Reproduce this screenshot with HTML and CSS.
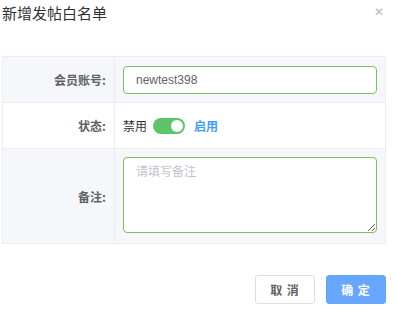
FILE: index.html
```html
<!DOCTYPE html>
<html lang="zh-CN">
<head>
    <meta charset="UTF-8">
    <title>新增发帖白名单</title>
    <link rel="stylesheet" href="styles.css">
</head>
<body>
    <div class="dialog">
        <div class="dialog-header">
            <span class="dialog-title">新增发帖白名单</span>
            <span class="dialog-close">&#x2715;</span>
        </div>

        <table class="form-table">
            <tr class="row-gray">
                <td class="label">会员账号:</td>
                <td class="field">
                    <input type="text" class="text-input" value="newtest398">
                </td>
            </tr>
            <tr>
                <td class="label">状态:</td>
                <td class="field">
                    <div class="switch-group">
                        <span class="switch-off">禁用</span>
                        <span class="switch"><span class="switch-knob"></span></span>
                        <span class="switch-on">启用</span>
                    </div>
                </td>
            </tr>
            <tr class="row-gray">
                <td class="label">备注:</td>
                <td class="field field-last">
                    <textarea class="text-area" placeholder="请填写备注"></textarea>
                </td>
            </tr>
        </table>

        <div class="dialog-footer">
            <button class="btn">取 消</button>
            <button class="btn btn-primary">确 定</button>
        </div>
    </div>
</body>
</html>
```

FILE: styles.css
```css
body {
    margin: 0;
    background-color: #fff;
    font-family: "Helvetica Neue", "Liberation Sans", "Noto Sans CJK SC", sans-serif;
    color: #303133;
}
.dialog {
    width: 384px;
    padding: 0 0 0 2px;
}
.dialog-header {
    display: flex;
    justify-content: space-between;
    align-items: center;
    height: 26px;
}
.dialog-title {
    font-size: 15px;
    color: #303133;
    font-family: "Noto Sans CJK SC", sans-serif;
    line-height: 26px;
}
.dialog-close {
    font-size: 12px;
    color: #b4b8bf;
    margin-right: 2px;
    margin-top: -3px;
}
.form-table {
    margin-top: 30px;
    width: 384px;
    border-collapse: collapse;
    border: 1px solid #ebeef5;
    font-size: 12px;
}
.form-table td {
    border: 1px solid #ebeef5;
    padding: 0;
}
.row-gray td {
    background-color: #f5f7fa;
}
.label {
    width: 103px;
    text-align: right;
    padding-right: 8px !important;
    color: #606266;
    font-weight: bold;
    font-family: "Noto Sans CJK SC", sans-serif;
}
.field {
    padding: 8px !important;
}
.field-last {
    padding-bottom: 10px !important;
}
tr:first-child,
tr:nth-child(2) {
    height: 46px;
}
.text-input {
    box-sizing: border-box;
    display: block;
    width: 254px;
    height: 28px;
    border: 1px solid #7cc35b;
    border-radius: 4px;
    padding: 0 12px;
    font-size: 12px;
    font-family: "Liberation Sans", sans-serif;
    color: #606266;
    outline: none;
    background: #fff;
}
.switch-group {
    display: flex;
    align-items: center;
}
.switch-off {
    color: #303133;
    font-family: "Noto Sans CJK SC", sans-serif;
    margin-right: 6px;
}
.switch {
    display: flex;
    align-items: center;
    justify-content: flex-end;
    box-sizing: border-box;
    width: 32px;
    height: 16px;
    border-radius: 8px;
    background-color: #5dc46c;
    padding: 0 2px;
}
.switch-knob {
    width: 12px;
    height: 12px;
    border-radius: 50%;
    background: #fff;
}
.switch-on {
    color: #409eff;
    font-weight: bold;
    font-family: "Noto Sans CJK SC", sans-serif;
    margin-left: 9px;
}
.text-area {
    box-sizing: border-box;
    display: block;
    width: 254px;
    height: 76px;
    border: 1px solid #7cc35b;
    border-radius: 4px;
    padding: 4px 12px;
    font-size: 12px;
    font-family: "Noto Sans CJK SC", sans-serif;
    color: #606266;
    outline: none;
    resize: vertical;
}
.text-area::placeholder {
    color: #c0c4cc;
}
.dialog-footer {
    display: flex;
    justify-content: flex-end;
    gap: 11px;
    margin-top: 31px;
}
.btn {
    width: 60px;
    height: 29px;
    border: 1px solid #dcdfe6;
    border-radius: 3px;
    background: #fff;
    color: #606266;
    font-size: 12px;
    font-weight: bold;
    font-family: "Noto Sans CJK SC", sans-serif;
    letter-spacing: 1px;
    padding: 0;
}
.btn-primary {
    background-color: #66a6ff;
    border-color: #66a6ff;
    color: #fff;
}
```
